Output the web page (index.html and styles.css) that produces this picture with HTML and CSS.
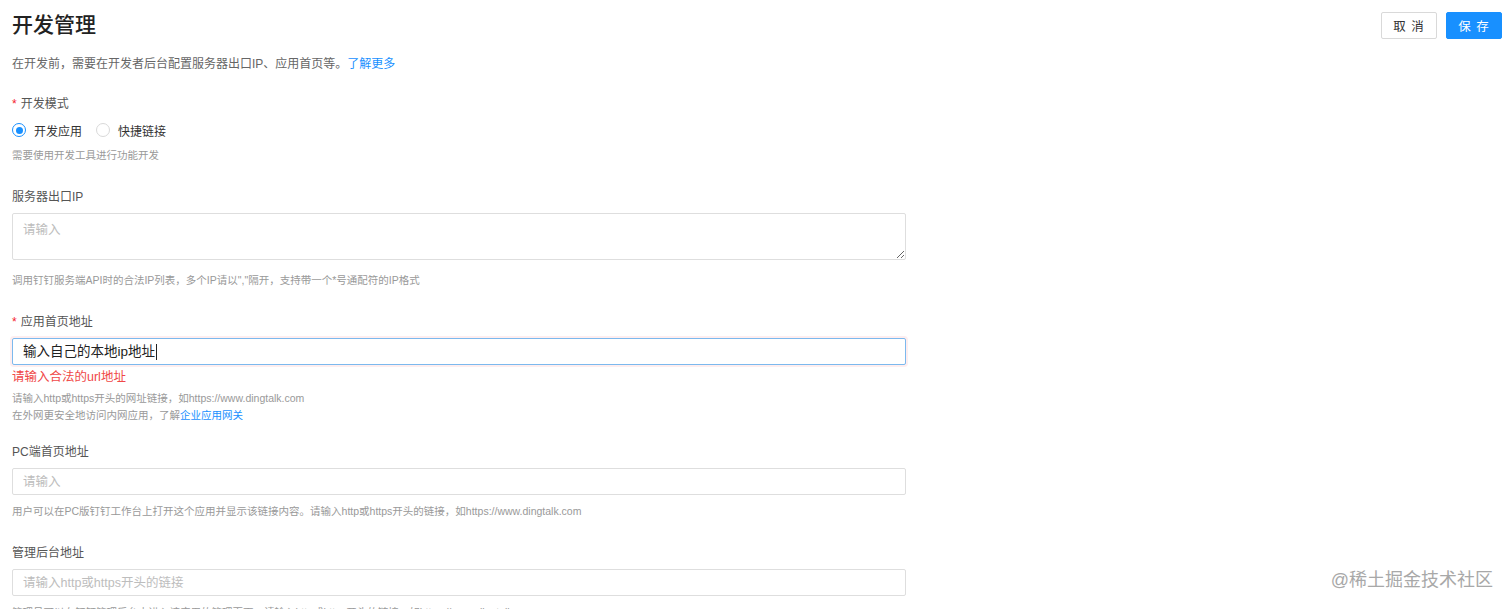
FILE: index.html
```html
<!DOCTYPE html>
<html lang="zh-CN">
<head>
  <meta charset="UTF-8" />
  <title>开发管理</title>
  <link rel="stylesheet" href="styles.css">
</head>
<body>
  <main class="page">
    <header class="header">
      <h1 class="title">开发管理</h1>
      <div class="actions">
        <button class="btn btn-default" type="button">取 消</button>
        <button class="btn btn-primary" type="button">保 存</button>
      </div>
    </header>

    <p class="desc">在开发前，需要在开发者后台配置服务器出口IP、应用首页等。<a class="link" href="#">了解更多</a></p>

    <form class="form">
      <div class="field">
        <label class="label required">开发模式</label>
        <div class="radios">
          <label class="radio is-checked"><span class="radio-dot"></span><span>开发应用</span></label>
          <label class="radio"><span class="radio-dot"></span><span>快捷链接</span></label>
        </div>
        <p class="hint hint-radio">需要使用开发工具进行功能开发</p>
      </div>

      <div class="field">
        <label class="label" for="ip">服务器出口IP</label>
        <textarea id="ip" class="textarea" placeholder="请输入"></textarea>
        <p class="hint hint-area">调用钉钉服务端API时的合法IP列表，多个IP请以","隔开，支持带一个*号通配符的IP格式</p>
      </div>

      <div class="field has-error">
        <label class="label required">应用首页地址</label>
        <div class="input is-focus"><span>输入自己的本地ip地址</span><span class="caret"></span></div>
        <p class="error">请输入合法的url地址</p>
        <p class="hint hint-tight">请输入http或https开头的网址链接，如https://www.dingtalk.com</p>
        <p class="hint hint-line">在外网更安全地访问内网应用，了解<a class="link" href="#">企业应用网关</a></p>
      </div>

      <div class="field">
        <label class="label" for="pc">PC端首页地址</label>
        <input id="pc" class="input" type="text" placeholder="请输入" />
        <p class="hint">用户可以在PC版钉钉工作台上打开这个应用并显示该链接内容。请输入http或https开头的链接，如https://www.dingtalk.com</p>
      </div>

      <div class="field">
        <label class="label" for="admin">管理后台地址</label>
        <input id="admin" class="input" type="text" placeholder="请输入http或https开头的链接" />
        <p class="hint">管理员可以在钉钉管理后台中进入该应用的管理页面，请输入http或https开头的链接，如https://www.dingtalk.com</p>
      </div>
    </form>
  </main>

  <div class="watermark">@稀土掘金技术社区</div>
</body>
</html>
```

FILE: styles.css
```css
:root{
  --blue:#1890ff;
  --red:#f5222d;
  --text:#333;
  --label:#555;
  --muted:#666;
  --hint:#999;
  --border:#dedede;
}

* { box-sizing: border-box; }
html, body { height: 100%; }
body{
  margin:0;
  background:#fff;
  color:var(--text);
  font-family: "Helvetica Neue", "Liberation Sans", "Noto Sans CJK SC", sans-serif;
  overflow:hidden;
}

.page{ padding: 11px 10px 0 12px; }

/* Header */
.header{ display:flex; align-items:center; justify-content:space-between; height:28px; }
.title{ margin:0; font-size:21px; line-height:28px; font-weight:500; color:#222; }
.actions{ display:flex; gap:9px; }
.btn{
  width:56px; height:27px; border-radius:2px; font-size:12.5px; cursor:pointer;
  font-family:inherit; padding:0; letter-spacing:1px;
}
.btn-default{ background:#fff; border:1px solid #d9d9d9; color:#333; }
.btn-primary{ background:var(--blue); border:1px solid var(--blue); color:#fff; }

.desc{ margin:15px 0 0; font-size:12px; line-height:20px; color:var(--muted); }
.link{ color:var(--blue); text-decoration:none; }

/* Form */
.form{ margin-top:20px; width:894px; }
.field{ margin-bottom:24px; }
.field.has-error{ margin-bottom:18px; }

.label{ display:block; font-size:12px; line-height:20px; color:var(--label); margin-bottom:6px; }
.label.required::before{ content:"*"; color:var(--red); margin-right:4px; font-size:12px; }

.radios{ display:flex; gap:14px; height:20px; align-items:center; }
.radio{ display:inline-flex; align-items:center; gap:8px; font-size:12px; color:#333; }
.radio-dot{
  width:14px; height:14px; border-radius:50%; border:1px solid #d9d9d9;
  display:inline-flex; align-items:center; justify-content:center; background:#fff;
}
.radio.is-checked .radio-dot{ border-color:var(--blue); }
.radio.is-checked .radio-dot::after{ content:""; width:7px; height:7px; border-radius:50%; background:var(--blue); }

.hint{ margin:8px 0 0; font-size:10.5px; line-height:16px; color:var(--hint); }
.hint-radio{ margin-top:7px; }
.hint-area{ margin-top:12px; }
.hint-tight{ margin-top:4px; line-height:17px; }
.hint-line{ margin-top:0; line-height:17px; }

.input, .textarea{
  display:block; width:100%; border:1px solid var(--border); border-radius:2px;
  background:#fff; font-family:inherit; color:#333; outline:none;
}
.input{ height:27px; padding:0 10px; font-size:12.5px; line-height:25px; }
.textarea{ height:47px; padding:5px 10px; font-size:12.5px; resize:vertical; }
.input::placeholder, .textarea::placeholder{ color:#bdbdbd; }

.input.is-focus{
  display:flex; align-items:center; font-size:13.5px; color:#222;
  border-color:#7cb9ee; box-shadow:0 0 0 2px rgba(245,34,45,.08);
}
.caret{ display:inline-block; width:1px; height:16px; background:#222; margin-left:1px; }

.error{ margin:3px 0 0; font-size:12.5px; line-height:18px; color:#f04848; }

/* Watermark */
.watermark{
  position:absolute; right:19px; top:568px;
  font-size:18px; line-height:24px; color:#a8a8a8; letter-spacing:0;
}
```
